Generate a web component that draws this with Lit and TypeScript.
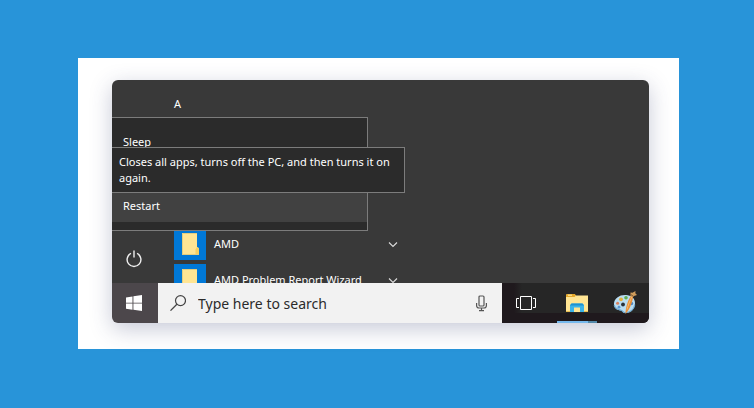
import { LitElement, html, css, svg } from "lit";
import { customElement, property } from "lit/decorators.js";

const icons = {
  power: svg`<path d="M10 5.400a6.900 6.900 0 1 0 6 0M13 2.500v7" fill="none" stroke="#f0f0f0" stroke-width="1.400"/>`,
  chevron: svg`<path d="M1 1.500 5 5.500 9 1.500" fill="none" stroke="#dcdcdc" stroke-width="1.100"/>`,
  folder: svg`<path d="M1 0h15v14l2 1.500V22H1z" fill="#ffe593"/><path d="M16 14l2 1v7H14.500v-5.500z" fill="#f8cf61"/><path d="M1.500 22V.500H16M1 21.500h17" fill="none" stroke="#e3cd80"/>`,
  windows: svg`<path d="M0 2.500 6.500 1.500V7.700H0zM7.400 1.300 16 0v7.700H7.400zM0 8.500h6.500v6.200L0 13.700zM7.400 8.500H16V16l-8.600-1.200z" fill="#fff"/>`,
  search: svg`<circle cx="10.500" cy="5.600" r="5" fill="none" stroke="#444" stroke-width="1.200"/><path d="M6.900 9.300.500 15.600" stroke="#444" stroke-width="1.300"/>`,
  mic: svg`<rect x="3" y="1" width="5" height="10" rx="1" fill="none" stroke="#555" stroke-width="1.200"/><path d="M.600 8v2.500q0 2.500 2.500 2.500h4.800q2.500 0 2.500-2.500V8M5.500 13v3M3 15.700h5" fill="none" stroke="#555" stroke-width="1.200"/>`,
  taskView: svg`<path d="M4.500.500h11v13h-11zM3 2.500H.500v9H3M17 2.500h2.500v9H17" fill="none" stroke="#fff"/>`,
  explorer: svg`<path d="M0 1.500Q0 0 1.500 0h7l1.500 1.500H22V18H0z" fill="#ffe593"/><path d="M0 1.500Q0 0 1.500 0h7l1.500 1.500L8.500 3H0z" fill="#e5a82b"/><path d="M2 1.200h4" stroke="#fff3b5"/><path d="M4 18V11l1.500-1.500h11L18 11v7h-4v-4.500H8V18z" fill="#3bb3e8"/><path d="M4 11.500 5.500 9.500h11l1.500 2z" fill="#1d91d0"/><path d="M0 17.500h4M18 17.500h4" stroke="#e8bd52"/>`,
  paint: svg`<path d="M1 13C1 7 7 3.500 13 4c5 .300 9 3 9 8 0 6-4 10-10 10-2.500 0-2-2-4-2.500C5 19 1 18.500 1 13z" fill="#b9ddf2"/><path d="M1.200 14c.800 4 4 4.500 6.800 5.200 2 .600 1.500 2.500 4 2.500 5 0 9-3 9.800-8" fill="none" stroke="#6ea8cf" stroke-width="1.200"/><circle cx="10" cy="13.500" r="1.900" fill="#28313a"/><circle cx="8" cy="8.300" r="1.900" fill="#e4b13c"/><circle cx="13" cy="6.700" r="1.800" fill="#62ae52"/><circle cx="4.600" cy="12.300" r="1.500" fill="#d9805f"/><circle cx="6" cy="16.200" r="1.400" fill="#5b95cf"/><circle cx="18.500" cy="12.500" r="1.700" fill="#5287c0"/><path d="M20 5c0 5-3 13-7.500 18C12.500 16 15 9 18.500 4z" fill="#e9903a"/><path d="M19 5.500c-2 4-4 9-5 13" stroke="#f7bd70" fill="none"/><path d="M17.500 1.500l2 .300L22.500 0l-.200 2.200L24 4l-3 1-1.500 1.500-2-1.500z" fill="#cf9c5b"/><path d="M17.800 3.500l2.800 2" stroke="#7a5832"/>`,
};

const icon = (name: keyof typeof icons, width: number, height: number) =>
  html`<svg width=${width} height=${height} viewBox="0 0 ${width} ${height}" aria-hidden="true">${icons[name]}</svg>`;

@customElement("start-panel")
class StartPanel extends LitElement {
  @property({ attribute: false }) apps: string[] = [];

  static styles = css`
    :host {
      display: grid;
      grid-template-columns: 46px 1fr;
      grid-template-rows: 100%;
      position: relative;
      height: 203px;
      overflow: hidden;
      background: #393939;
      color: #fff;
      font-size: 11px;
      line-height: 16px;
    }
    button {
      border: 0;
      padding: 0;
      background: none;
      color: inherit;
      font: inherit;
      text-align: left;
    }
    svg { display: block; flex: none; }
    .rail { display: flex; align-items: flex-end; }
    .power {
      width: 46px;
      height: 48px;
      padding-right: 2px;
      display: grid;
      place-items: center;
    }
    .list { padding: 16px 16px 0; min-width: 0; }
    .letter { margin: 0 0 114px; font: inherit; }
    .app {
      display: flex;
      align-items: center;
      gap: 8px;
      height: 36px;
      width: 224px;
    }
    .tile {
      width: 32px;
      height: 32px;
      background: #0078d7;
      display: grid;
      place-items: center;
    }
    .name { flex: 1; white-space: nowrap; }
    .menu {
      position: absolute;
      top: 37px;
      left: 0;
      width: 256px;
      box-sizing: border-box;
      display: grid;
      gap: 32px;
      padding: 8px 0;
      border: 1px solid #7c7c7c;
      border-left: 0;
      background: #2b2b2b;
    }
    .item { height: 32px; padding-left: 11px; }
    .selected { background: #414141; }
    .tip {
      position: absolute;
      top: 67px;
      left: 0;
      width: 293px;
      box-sizing: border-box;
      padding: 6px 7px;
      border: 1px solid #7c7c7c;
      border-left: 0;
      background: #2b2b2b;
    }
  `;

  render() {
    return html`
      <div class="rail">
        <button class="power" aria-label="Power">${icon("power", 26, 22)}</button>
      </div>
      <div class="list">
        <h2 class="letter">A</h2>
        ${this.apps.map(
          (name) => html`<button class="app">
            <span class="tile">${icon("folder", 19, 22)}</span>
            <span class="name">${name}</span>
            ${icon("chevron", 10, 7)}
          </button>`
        )}
      </div>
      <div class="menu">
        <button class="item">Sleep</button>
        <button class="item selected" aria-describedby="tip">Restart</button>
      </div>
      <div class="tip" id="tip" role="tooltip">
        Closes all apps, turns off the PC, and then turns it on again.
      </div>
    `;
  }
}

@customElement("task-bar")
class TaskBar extends LitElement {
  static styles = css`
    :host { display: flex; height: 40px; }
    button {
      border: 0;
      padding: 0;
      background: none;
      display: grid;
      place-items: center;
      width: 48px;
      height: 40px;
    }
    svg { display: block; flex: none; }
    .start { width: 46px; padding-right: 2px; background: #4c474b; }
    .search {
      flex: 1;
      min-width: 0;
      display: flex;
      align-items: center;
      background: #f2f2f2;
      padding: 0 14px 0 12px;
      gap: 12px;
    }
    .field {
      flex: 1;
      min-width: 0;
      border: 0;
      padding: 0;
      outline: 0;
      background: none;
      font: inherit;
      font-size: 14px;
      color: #2b2b2b;
    }
    .field::placeholder { color: #2b2b2b; opacity: 1; }
    .mic { width: 14px; }
    .tray {
      display: flex;
      background:
        linear-gradient(#1f191d, #1f191d) bottom / 100% 10px no-repeat,
        linear-gradient(90deg, #1f191d 12px, #262626 20px);
    }
    .pinned { display: flex; margin-left: 3px; }
    .running {
      background:
        linear-gradient(90deg, #76b9ed 31px, #5289aa 31px) bottom / 40px 2px no-repeat;
    }
  `;

  render() {
    return html`
      <button class="start" aria-label="Start">${icon("windows", 16, 16)}</button>
      <label class="search">
        ${icon("search", 16, 16)}
        <input class="field" type="text" placeholder="Type here to search" aria-label="Search" />
        <button class="mic" aria-label="Voice search">${icon("mic", 11, 17)}</button>
      </label>
      <div class="tray">
        <button aria-label="Task view">${icon("taskView", 20, 14)}</button>
        <div class="pinned">
          <button class="running" aria-label="File Explorer">${icon("explorer", 22, 18)}</button>
          <button aria-label="Paint">${icon("paint", 24, 24)}</button>
        </div>
      </div>
    `;
  }
}

@customElement("app-root")
class AppRoot extends LitElement {
  static styles = css`
    :host {
      display: block;
      box-sizing: border-box;
      min-height: 100vh;
      padding: 58px 75px 58px 78px;
      background: #2894d9;
      font-family: "Noto Sans", "Open Sans", sans-serif;
    }
    .sheet {
      background: #fff;
      padding: 22px 30px 26px 34px;
    }
    .screen {
      border-radius: 6px;
      overflow: hidden;
      box-shadow: 0 6px 22px rgba(50, 60, 110, 0.28);
    }
  `;

  render() {
    return html`
      <main class="sheet">
        <div class="screen">
          <start-panel .apps=${["AMD", "AMD Problem Report Wizard"]}></start-panel>
          <task-bar></task-bar>
        </div>
      </main>
    `;
  }
}
